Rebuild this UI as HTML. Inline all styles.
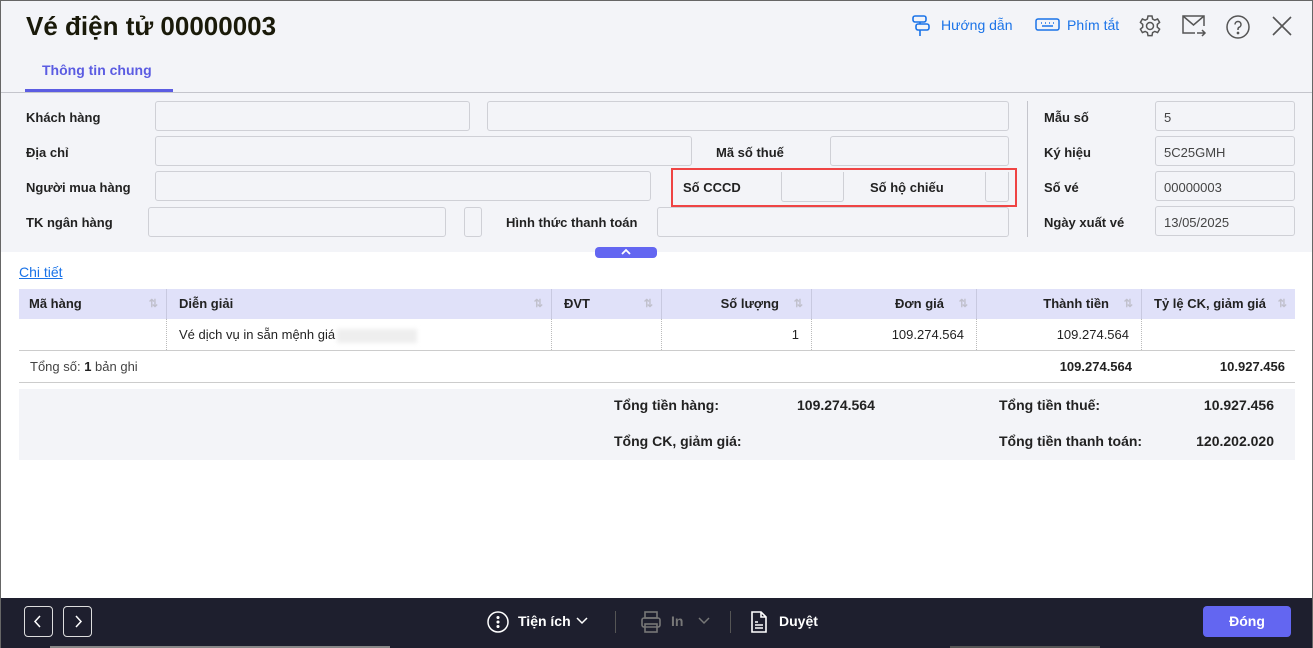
<!DOCTYPE html>
<html><head><meta charset="utf-8">
<style>
*{box-sizing:border-box;margin:0;padding:0}
body{width:1313px;height:648px;overflow:hidden;font-family:"Liberation Sans",sans-serif;font-size:13px;color:#222;background:#fff;position:relative}
.a{position:absolute}
.frame{left:0;top:0;width:1313px;height:648px;border:1px solid #666;border-bottom:none;pointer-events:none;z-index:9}
.top{left:0;top:0;width:1313px;height:252px;background:#f3f4f8}
.lbl{position:absolute;font-weight:bold;font-size:13px;color:#222}
.in{position:absolute;height:30px;border:1px solid #cfd0d6;border-radius:3px;background:#f3f4f8;font-size:13px;color:#444;padding:8px 8px}
.th{position:absolute;top:289px;height:30px;font-weight:bold;line-height:30px;font-size:13px;border-right:1px solid #c8c9e0}
.s{color:#c0c0cc;font-size:11px;position:absolute;right:8px;top:0}
.td{position:absolute;top:319px;height:31px;line-height:31px;border-right:1px dotted #bbb}
.btxt{color:#fff;font-weight:bold;font-size:14px}
</style></head><body>
<div class="a top"></div>
<div class="a frame"></div>
<div class="a" style="left:26px;top:11px;font-size:26px;font-weight:bold;color:#1a1a0a">Vé điện tử 00000003</div>

<svg class="a" style="left:910px;top:14px" width="22" height="24" viewBox="0 0 22 24" fill="none" stroke="#1a73e8" stroke-width="1.6"><rect x="3" y="2" width="13" height="6" rx="2"/><rect x="6" y="10" width="13" height="6" rx="2"/><path d="M10 16v6M10 8v2"/></svg>
<div class="a" style="left:941px;top:17px;color:#1a73e8;font-size:14px">Hướng dẫn</div>
<svg class="a" style="left:1035px;top:17px" width="26" height="16" viewBox="0 0 26 16" fill="none" stroke="#1a73e8" stroke-width="1.5"><rect x="1" y="2" width="23" height="11" rx="2"/><path d="M6 6h1M10 6h1M14 6h1M18 6h1M7 9h11" /></svg>
<div class="a" style="left:1067px;top:17px;color:#1a73e8;font-size:14px">Phím tắt</div>
<svg class="a" style="left:1138px;top:14px" width="24" height="24" viewBox="0 0 24 24" fill="none" stroke="#555" stroke-width="1.5"><circle cx="12" cy="12" r="3.5"/><path d="M10 2h4l.6 3 2.2 1.2 2.8-1.2 2 3.4-2.3 2v2.8l2.3 2-2 3.4-2.8-1.2-2.2 1.2-.6 3h-4l-.6-3-2.2-1.2-2.8 1.2-2-3.4 2.3-2v-2.8l-2.3-2 2-3.4 2.8 1.2L9.4 5z"/></svg>
<svg class="a" style="left:1181px;top:14px" width="26" height="24" viewBox="0 0 26 24" fill="none" stroke="#555" stroke-width="1.5"><path d="M14 19H2V2h21v10"/><path d="M2 2l10.5 9L23 2"/><path d="M16 19h8M21 16l3 3-3 3"/></svg>
<svg class="a" style="left:1226px;top:15px" width="24" height="24" viewBox="0 0 24 24" fill="none" stroke="#555" stroke-width="1.5"><circle cx="12" cy="12" r="11"/><path d="M9 9.5a3 3 0 1 1 4 2.8c-.8.4-1 1-1 2v.7"/><circle cx="12" cy="18" r=".6" fill="#555"/></svg>
<svg class="a" style="left:1272px;top:16px" width="20" height="20" viewBox="0 0 20 20" stroke="#555" stroke-width="1.6"><path d="M1 1l18 18M19 1L1 19"/></svg>

<div class="a" style="left:42px;top:62px;font-weight:bold;font-size:14px;color:#5b5ce2">Thông tin chung</div>
<div class="a" style="left:25px;top:89px;width:148px;height:3px;background:#5b5ce2"></div>
<div class="a" style="left:0;top:92px;width:1313px;height:1px;background:#c4c5cc"></div>

<div class="lbl" style="left:26px;top:110px">Khách hàng</div>
<div class="in" style="left:155px;top:101px;width:315px"></div>
<div class="in" style="left:487px;top:101px;width:522px"></div>
<div class="lbl" style="left:26px;top:145px">Địa chỉ</div>
<div class="in" style="left:155px;top:136px;width:537px"></div>
<div class="lbl" style="left:716px;top:145px">Mã số thuế</div>
<div class="in" style="left:830px;top:136px;width:179px"></div>
<div class="lbl" style="left:26px;top:180px">Người mua hàng</div>
<div class="in" style="left:155px;top:171px;width:496px"></div>
<div class="a" style="left:671px;top:168px;width:346px;height:39px;border:2px solid #ef4444"></div>
<div class="lbl" style="left:683px;top:180px">Số CCCD</div>
<div class="in" style="left:781px;top:172px;width:63px;border-top:none;border-radius:0 0 3px 3px"></div>
<div class="lbl" style="left:870px;top:180px">Số hộ chiếu</div>
<div class="in" style="left:985px;top:172px;width:24px;border-top:none;border-radius:0 0 3px 3px"></div>
<div class="lbl" style="left:26px;top:215px">TK ngân hàng</div>
<div class="in" style="left:148px;top:207px;width:298px"></div>
<div class="in" style="left:464px;top:207px;width:16px"></div>
<div class="lbl" style="left:506px;top:215px">Hình thức thanh toán</div>
<div class="in" style="left:657px;top:207px;width:352px"></div>
<div class="a" style="left:1027px;top:101px;width:1px;height:136px;background:#c4c5cc"></div>
<div class="lbl" style="left:1044px;top:110px">Mẫu số</div>
<div class="in" style="left:1155px;top:101px;width:140px">5</div>
<div class="lbl" style="left:1044px;top:145px">Ký hiệu</div>
<div class="in" style="left:1155px;top:136px;width:140px">5C25GMH</div>
<div class="lbl" style="left:1044px;top:180px">Số vé</div>
<div class="in" style="left:1155px;top:171px;width:140px">00000003</div>
<div class="lbl" style="left:1044px;top:215px">Ngày xuất vé</div>
<div class="in" style="left:1155px;top:206px;width:140px">13/05/2025</div>
<div class="a" style="left:595px;top:247px;width:62px;height:11px;background:#6366f1;border-radius:4px"></div>
<svg class="a" style="left:620px;top:248px" width="12" height="8" viewBox="0 0 12 8" fill="none" stroke="#fff" stroke-width="1.8"><path d="M2 6l4-4 4 4"/></svg>

<div class="a" style="left:19px;top:264px;color:#1a73e8;text-decoration:underline;font-size:14px">Chi tiết</div>

<div class="a" style="left:19px;top:289px;width:1276px;height:30px;background:#e0e1f9"></div>
<div class="th" style="left:19px;width:148px;padding-left:10px">Mã hàng<span class="s">⇅</span></div>
<div class="th" style="left:167px;width:385px;padding-left:12px">Diễn giải<span class="s">⇅</span></div>
<div class="th" style="left:552px;width:110px;padding-left:12px">ĐVT<span class="s">⇅</span></div>
<div class="th" style="left:662px;width:150px;text-align:right;padding-right:32px">Số lượng<span class="s">⇅</span></div>
<div class="th" style="left:812px;width:165px;text-align:right;padding-right:32px">Đơn giá<span class="s">⇅</span></div>
<div class="th" style="left:977px;width:165px;text-align:right;padding-right:32px">Thành tiền<span class="s">⇅</span></div>
<div class="th" style="left:1142px;width:153px;border-right:none;padding-left:12px">Tỷ lệ CK, giảm giá<span class="s">⇅</span></div>
<div class="td" style="left:19px;width:148px"></div>
<div class="td" style="left:167px;width:385px;padding-left:12px">Vé dịch vụ in sẵn mệnh giá<span style="display:inline-block;width:80px;height:14px;background:#eee;vertical-align:middle;margin-left:2px;filter:blur(2px)"></span></div>
<div class="td" style="left:552px;width:110px"></div>
<div class="td" style="left:662px;width:150px;text-align:right;padding-right:12px">1</div>
<div class="td" style="left:812px;width:165px;text-align:right;padding-right:12px">109.274.564</div>
<div class="td" style="left:977px;width:165px;text-align:right;padding-right:12px">109.274.564</div>
<div class="a" style="left:19px;top:350px;width:1276px;height:1px;background:#ccc"></div>
<div class="a" style="left:30px;top:359px;color:#444">Tổng số: <b style="color:#222">1</b> bản ghi</div>
<div class="a" style="left:977px;top:359px;width:155px;text-align:right;font-weight:bold">109.274.564</div>
<div class="a" style="left:1142px;top:359px;width:143px;text-align:right;font-weight:bold">10.927.456</div>
<div class="a" style="left:19px;top:382px;width:1276px;height:1px;background:#ccc"></div>
<div class="a" style="left:19px;top:389px;width:1276px;height:71px;background:#f3f4f8"></div>
<div class="lbl" style="left:614px;top:397px;font-size:14px">Tổng tiền hàng:</div>
<div class="lbl" style="left:797px;top:397px;font-size:14px">109.274.564</div>
<div class="lbl" style="left:999px;top:397px;font-size:14px">Tổng tiền thuế:</div>
<div class="lbl" style="left:1150px;top:397px;width:124px;text-align:right;font-size:14px">10.927.456</div>
<div class="lbl" style="left:614px;top:433px;font-size:14px">Tổng CK, giảm giá:</div>
<div class="lbl" style="left:999px;top:433px;font-size:14px">Tổng tiền thanh toán:</div>
<div class="lbl" style="left:1150px;top:433px;width:124px;text-align:right;font-size:14px">120.202.020</div>

<div class="a" style="left:0;top:598px;width:1313px;height:50px;background:#1e1f2e"></div>
<div class="a" style="left:50px;top:646px;width:340px;height:2px;background:#888"></div>
<div class="a" style="left:950px;top:646px;width:150px;height:2px;background:#555"></div>
<div class="a" style="left:24px;top:606px;width:29px;height:31px;border:1px solid #ddd;border-radius:4px"></div>
<div class="a" style="left:63px;top:606px;width:29px;height:31px;border:1px solid #ddd;border-radius:4px"></div>
<svg class="a" style="left:33px;top:615px" width="10" height="13" viewBox="0 0 10 13" fill="none" stroke="#fff" stroke-width="1.5"><path d="M7 1L2 6.5 7 12"/></svg>
<svg class="a" style="left:73px;top:615px" width="10" height="13" viewBox="0 0 10 13" fill="none" stroke="#fff" stroke-width="1.5"><path d="M3 1l5 5.5L3 12"/></svg>
<svg class="a" style="left:487px;top:611px" width="22" height="22" viewBox="0 0 22 22" fill="none" stroke="#fff" stroke-width="1.5"><circle cx="11" cy="11" r="10"/><circle cx="11" cy="6.5" r=".8" fill="#fff"/><circle cx="11" cy="11" r=".8" fill="#fff"/><circle cx="11" cy="15.5" r=".8" fill="#fff"/></svg>
<div class="a btxt" style="left:518px;top:613px">Tiện ích</div>
<svg class="a" style="left:576px;top:617px" width="12" height="8" viewBox="0 0 12 8" fill="none" stroke="#fff" stroke-width="1.5"><path d="M1 1l5 5 5-5"/></svg>
<div class="a" style="left:615px;top:611px;width:1px;height:22px;background:#555"></div>
<svg class="a" style="left:640px;top:610px" width="22" height="24" viewBox="0 0 22 24" fill="none" stroke="#777" stroke-width="1.6"><rect x="5" y="2" width="12" height="6"/><rect x="2" y="8" width="18" height="9" rx="2"/><rect x="5" y="14" width="12" height="8"/></svg>
<div class="a" style="left:671px;top:613px;color:#777;font-weight:bold;font-size:14px">In</div>
<svg class="a" style="left:698px;top:617px" width="12" height="8" viewBox="0 0 12 8" fill="none" stroke="#777" stroke-width="1.5"><path d="M1 1l5 5 5-5"/></svg>
<div class="a" style="left:730px;top:611px;width:1px;height:22px;background:#555"></div>
<svg class="a" style="left:750px;top:610px" width="18" height="24" viewBox="0 0 18 24" fill="none" stroke="#fff" stroke-width="1.6"><path d="M2 2h9l5 5v15H2z"/><path d="M11 2v5h5M5 12h3M5 15h8M5 18h8"/></svg>
<div class="a btxt" style="left:779px;top:613px">Duyệt</div>
<div class="a" style="left:1203px;top:606px;width:88px;height:31px;background:#6366f1;border-radius:4px;color:#fff;font-weight:bold;font-size:14px;text-align:center;line-height:31px">Đóng</div>
</body></html>
